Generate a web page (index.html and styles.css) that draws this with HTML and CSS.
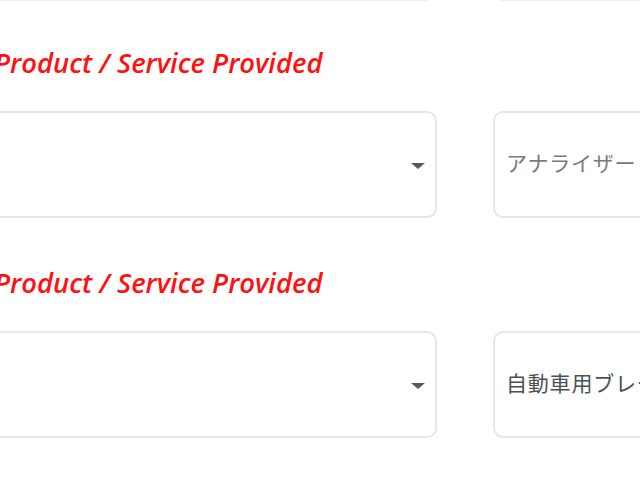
FILE: index.html
```html
<!DOCTYPE html>
<html>
<head>
<meta charset="utf-8">
<link rel="stylesheet" href="styles.css">
</head>
<body>
<div class="topstrip"><div class="strip-left"></div><div class="strip-right"></div></div>
<div class="page">
  <section class="item">
    <div class="label">Product / Service Provided</div>
    <div class="row">
      <div class="select"><span class="caret"></span></div>
      <div class="input placeholder">アナライザー（分析装置）</div>
    </div>
  </section>
  <section class="item">
    <div class="label">Product / Service Provided</div>
    <div class="row">
      <div class="select"><span class="caret"></span></div>
      <div class="input">自動車用ブレーキ部品</div>
    </div>
  </section>
</div>
</body>
</html>
```

FILE: styles.css
```css
html, body {
  margin: 0;
  padding: 0;
  background: #ffffff;
  overflow: hidden;
  width: 640px;
  height: 480px;
}
.topstrip {
  display: flex;
  height: 1px;
  gap: 72px;
}
.strip-left {
  width: 428px;
  background: #f1f1f1;
}
.strip-right {
  flex: 1;
  background: #f1f1f1;
}
.page {
  margin-left: -40px;
  width: 760px;
  padding-top: 46px;
}
.item {
  padding-bottom: 49px;
}
.label {
  font-family: "Open Sans", "Noto Sans", sans-serif;
  font-style: italic;
  font-weight: 600;
  font-size: 27.4px;
  line-height: 32px;
  color: #ff1111;
  margin-left: 34px;
  margin-bottom: 32px;
  white-space: nowrap;
}
.row {
  display: grid;
  grid-template-columns: 477px 240px;
  column-gap: 56px;
}
.select, .input {
  box-sizing: border-box;
  height: 107px;
  border: 2px solid #e3e7eb;
  border-radius: 10px;
  background: #fff;
}
.select {
  display: flex;
  align-items: center;
  justify-content: flex-end;
  padding-right: 10px;
}
.caret {
  width: 0;
  height: 0;
  border-left: 7px solid transparent;
  border-right: 7px solid transparent;
  border-top: 6px solid #5a5a5a;
  margin-top: 2px;
}
.input {
  display: flex;
  align-items: center;
  padding-left: 11px;
  padding-bottom: 6px;
  font-family: "Noto Sans CJK JP", sans-serif;
  font-size: 21px;
  letter-spacing: 0.8px;
  color: #495057;
  white-space: nowrap;
  overflow: hidden;
}
.input.placeholder {
  color: #7a7a7a;
}
```
